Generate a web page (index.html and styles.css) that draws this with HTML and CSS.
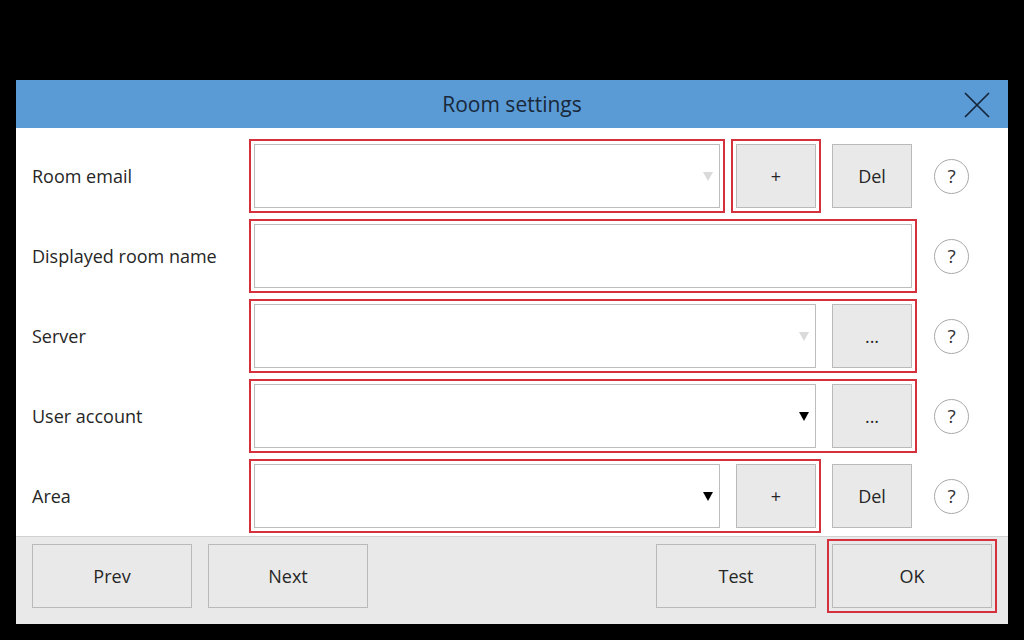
FILE: index.html
```html
<!DOCTYPE html>
<html lang="en">
<head>
  <meta charset="UTF-8">
  <meta name="viewport" content="width=device-width, initial-scale=1.0">
  <title>Room settings</title>
  <link rel="stylesheet" href="styles.css">
</head>
<body>
  <div class="dialog">
    <div class="title-bar">
      <span class="title">Room settings</span>
      <button class="close" aria-label="Close">
        <svg width="26" height="26" viewBox="0 0 26 26">
          <path d="M1 1 L25 25 M25 1 L1 25" stroke="#15253a" stroke-width="1.7" fill="none"/>
        </svg>
      </button>
    </div>

    <div class="form">
      <div class="row">
        <label class="label">Room email</label>
        <div class="grp err">
          <div class="combo w-short"><span class="arrow off"></span></div>
        </div>
        <div class="grp err"><button class="btn">+</button></div>
        <div class="grp"><button class="btn">Del</button></div>
        <span class="help">?</span>
      </div>

      <div class="row">
        <label class="label">Displayed room name</label>
        <div class="grp err">
          <div class="combo w-full"></div>
        </div>
        <span class="help">?</span>
      </div>

      <div class="row">
        <label class="label">Server</label>
        <div class="grp err">
          <div class="combo w-mid"><span class="arrow off"></span></div>
          <button class="btn">...</button>
        </div>
        <span class="help">?</span>
      </div>

      <div class="row">
        <label class="label">User account</label>
        <div class="grp err">
          <div class="combo w-mid"><span class="arrow"></span></div>
          <button class="btn">...</button>
        </div>
        <span class="help">?</span>
      </div>

      <div class="row">
        <label class="label">Area</label>
        <div class="grp err">
          <div class="combo w-short"><span class="arrow"></span></div>
          <button class="btn">+</button>
        </div>
        <div class="grp"><button class="btn">Del</button></div>
        <span class="help">?</span>
      </div>
    </div>

    <div class="footer">
      <div class="grp"><button class="btn wide">Prev</button></div>
      <div class="grp"><button class="btn wide">Next</button></div>
      <div class="spacer"></div>
      <div class="grp"><button class="btn wide">Test</button></div>
      <div class="grp err"><button class="btn wide">OK</button></div>
    </div>
  </div>
</body>
</html>
```

FILE: styles.css
```css
body {
  margin: 0;
  background: #000000;
  font-family: "Open Sans", "Noto Sans", sans-serif;
  color: #262626;
  height: 640px;
  overflow: hidden;
}

.dialog {
  width: 992px;
  margin: 80px 16px 0;
  background: #ffffff;
}

.title-bar {
  height: 48px;
  background: #5b9bd5;
  display: flex;
  align-items: center;
  justify-content: center;
  position: relative;
}

.title {
  font-size: 21px;
  color: #18283a;
}

.close {
  position: absolute;
  right: 18px;
  top: 12px;
  width: 26px;
  height: 26px;
  padding: 0;
  border: none;
  background: none;
}

.close svg {
  display: block;
}

.form {
  padding: 8px 0 0 16px;
}

.row {
  height: 80px;
  display: flex;
  align-items: center;
  gap: 6px;
}

.label {
  width: 211px;
  font-size: 18px;
  color: #262626;
}

.grp {
  display: flex;
  gap: 16px;
  padding: 3px;
  border: 2px solid transparent;
}

.grp.err {
  border-color: #d4303d;
}

.combo {
  height: 64px;
  border: 1px solid #bdbdbd;
  background: #ffffff;
  display: flex;
  align-items: center;
  justify-content: flex-end;
  padding-right: 6px;
  box-sizing: border-box;
}

.w-short { width: 466px; }
.w-mid { width: 562px; }
.w-full { width: 658px; }

.arrow {
  width: 0;
  height: 0;
  border-left: 5px solid transparent;
  border-right: 5px solid transparent;
  border-top: 9px solid #000000;
}

.arrow.off {
  border-top-color: #dadada;
}

.btn {
  width: 80px;
  height: 64px;
  background: #e9e9e9;
  border: 1px solid #b9b9b9;
  font-family: "Open Sans", "Noto Sans", sans-serif;
  font-size: 18px;
  color: #262626;
  padding: 0;
}

.btn.wide {
  width: 160px;
}

.help {
  width: 33px;
  height: 33px;
  margin-left: 11px;
  border: 1px solid #a9a9a9;
  border-radius: 50%;
  display: flex;
  align-items: center;
  justify-content: center;
  font-size: 19px;
  color: #333333;
}

.footer {
  border-top: 1px solid #d2d2d2;
  background: #e9e9e9;
  display: flex;
  gap: 6px;
  padding: 2px 11px 11px;
}

.spacer {
  flex: 1;
}
```
